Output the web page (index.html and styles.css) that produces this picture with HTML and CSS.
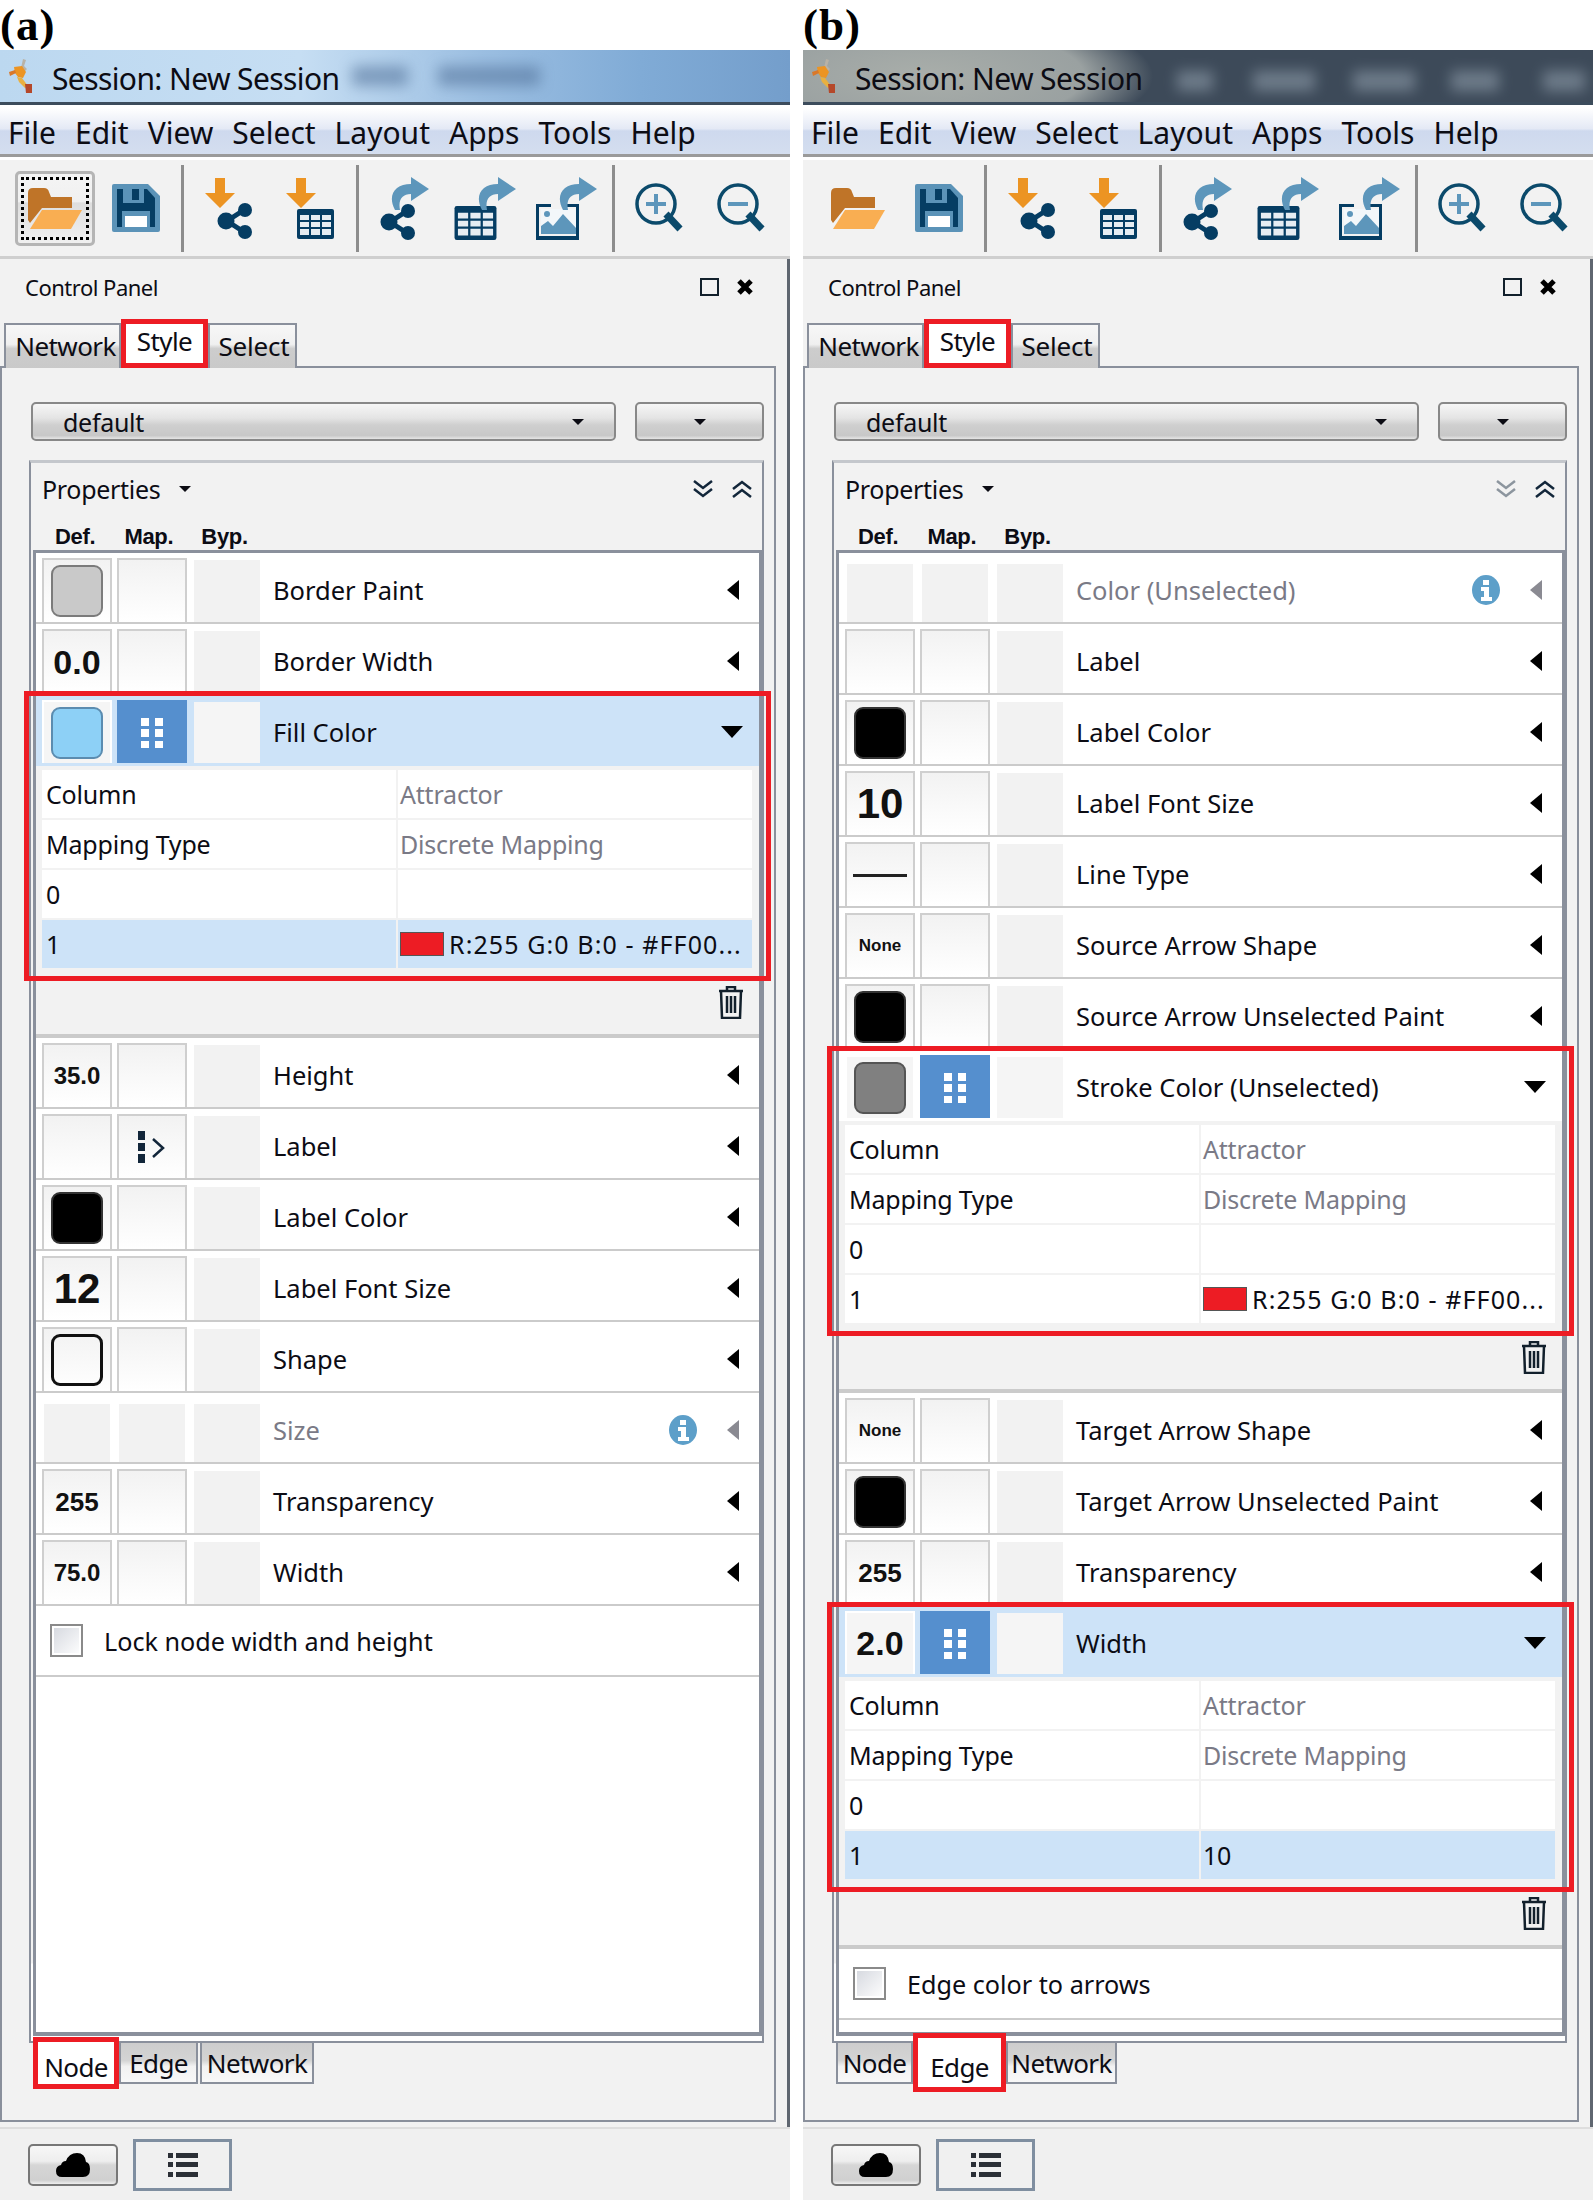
FILE: index.html
```html
<!DOCTYPE html>
<html lang="en">

<head>
    <meta charset="UTF-8" />
    <title>Session: New Session</title>
    <link rel="stylesheet" href="styles.css">
</head>

<body>
    <svg class="defs" width="0" height="0">
        <symbol id="i-run" viewBox="0 0 26 34">
            <path d="M15 0l3 1-2 6 3 3-2 2-4-3z" fill="#b9b2a6" />
            <path d="M6 8l8-1 4 6-3 6-5-1-3-4z" fill="#ec9423" />
            <path d="M1 13l6-2 1 3-6 3z" fill="#d9782a" />
            <path d="M9 18l5 1 6 8-3 2-6-6z" fill="#e9b040" />
            <path d="M17 25h7v9h-6z" fill="#b5482a" />
        </symbol>
        <symbol id="i-folder" viewBox="0 0 54 41">
            <path d="M0 5q0-5 5-5h11q4 0 5 4l2 5h21q0 0 0 4v7H14L2 35 0 32z" fill="#bf7428" />
            <path d="M14 22h40l-11 19H2z" fill="#f9ae52" />
        </symbol>
        <symbol id="i-save" viewBox="0 0 48 48">
            <path d="M0 2q0-2 2-2h34l12 12v34q0 2-2 2H2q-2 0-2-2z" fill="#5b93b8" />
            <path d="M5 5h30l8 9v29H5z" fill="#053d63" />
            <path d="M11 5h21v14H11z" fill="#5b93b8" />
            <path d="M20 5h7v11h-7z" fill="#053d63" />
            <path d="M10 27h28v18H10z" fill="#5b93b8" />
            <path d="M13 32h22v11H13z" fill="#fff" />
        </symbol>
        <symbol id="i-down" viewBox="0 0 30 30">
            <path d="M10 0h10v15h10L15 30 0 15h10z" fill="#ec9423" />
        </symbol>
        <symbol id="i-share" viewBox="0 0 36 36">
            <path d="M27 7L10 18l17 11" fill="none" stroke="#053d63" stroke-width="5" />
            <circle cx="9" cy="18" r="8.5" fill="#053d63" />
            <circle cx="28" cy="7" r="7" fill="#053d63" />
            <circle cx="28" cy="29" r="7" fill="#053d63" />
        </symbol>
        <symbol id="i-table" viewBox="0 0 37 30">
            <rect width="37" height="30" rx="2" fill="#053d63" />
            <path d="M3 6h9v5H3zM14 6h9v5h-9zM25 6h9v5h-9zM3 13h9v5H3zM14 13h9v5h-9zM25 13h9v5h-9zM3 20h9v6H3zM14 20h9v6h-9zM25 20h9v6h-9z" fill="#e6edf2" />
        </symbol>
        <symbol id="i-curve" viewBox="0 0 39 33">
            <path d="M5 33C-3 18 5 7 21 7V0l18 12-18 12v-7C12 17 8 23 10 33z" fill="#5d96bb" />
        </symbol>
        <symbol id="i-picture" viewBox="0 0 43 36">
            <path d="M0 0h15v3H3v29h37V3h-9V0h12v36H0z" fill="#053d63" />
            <path d="M5 5h35v25H5z" fill="#f3f7fa" />
            <path d="M5 30V22l7-5 5 5 10-12 13 14v6z" fill="#5d96bb" />
            <circle cx="11" cy="10" r="3" fill="#5d96bb" />
        </symbol>
        <symbol id="i-import-net" viewBox="0 0 48 61">
            <use href="#i-down" width="30" height="30" />
            <use href="#i-share" x="12" y="25" width="36" height="36" />
        </symbol>
        <symbol id="i-import-table" viewBox="0 0 49 61">
            <use href="#i-down" width="32" height="30" />
            <use href="#i-table" x="12" y="31" width="37" height="30" />
        </symbol>
        <symbol id="i-export-net" viewBox="0 0 49 63">
            <use href="#i-curve" x="10" width="39" height="33" />
            <use href="#i-share" y="27" width="36" height="36" />
        </symbol>
        <symbol id="i-export-table" viewBox="0 0 62 63">
            <use href="#i-table" y="29" width="43" height="34" />
            <use href="#i-curve" x="23" width="39" height="33" />
        </symbol>
        <symbol id="i-export-img" viewBox="0 0 61 63">
            <use href="#i-picture" y="27" width="43" height="36" />
            <use href="#i-curve" x="22" width="39" height="33" />
        </symbol>
        <symbol id="i-zoom-in" viewBox="0 0 50 50">
            <path d="M31 31l14 15" stroke="#0b4a6b" stroke-width="7" fill="none" />
            <circle cx="21" cy="21" r="19" fill="none" stroke="#0b4a6b" stroke-width="3.5" />
            <path d="M21 11v20M11 21h20" stroke="#5d96bb" stroke-width="4" />
        </symbol>
        <symbol id="i-zoom-out" viewBox="0 0 50 50">
            <path d="M31 31l14 15" stroke="#0b4a6b" stroke-width="7" fill="none" />
            <circle cx="21" cy="21" r="19" fill="none" stroke="#0b4a6b" stroke-width="3.5" />
            <path d="M11 21h20" stroke="#5d96bb" stroke-width="4" />
        </symbol>
        <symbol id="i-close" viewBox="0 0 18 18">
            <path d="M3 3l12 12M15 3L3 15" stroke="#000" stroke-width="5" />
        </symbol>
        <symbol id="i-expand" viewBox="0 0 22 20">
            <path d="M2 2l9 7 9-7M2 10l9 7 9-7" fill="none" stroke="#12263a" stroke-width="2.5" />
        </symbol>
        <symbol id="i-collapse" viewBox="0 0 22 20">
            <path d="M2 10l9-7 9 7M2 18l9-7 9 7" fill="none" stroke="#12263a" stroke-width="2.5" />
        </symbol>
        <symbol id="i-dots" viewBox="0 0 24 32">
            <path d="M1 1h8v8H1zM15 1h8v8h-8zM1 12h8v8H1zM15 12h8v8h-8zM1 24h8v7H1zM15 24h8v7h-8z" fill="#fff" />
        </symbol>
        <symbol id="i-pass" viewBox="0 0 28 32">
            <path d="M0 0h7v9H0zM0 12h7v8H0zM0 23h7v9H0z" fill="#12263a" />
            <path d="M15 8l10 9-10 9" fill="none" stroke="#12263a" stroke-width="2.5" />
        </symbol>
        <symbol id="i-info" viewBox="0 0 28 30">
            <ellipse cx="14" cy="15" rx="14" ry="15" fill="#5d9fc9" />
            <path d="M11 5h6v5h-6zM9 12h8v10h3v4H9v-4h3v-6H9z" fill="#fff" />
        </symbol>
        <symbol id="i-trash" viewBox="0 0 26 33">
            <path d="M9 4V1h8v3M1 5h24M3 5l1 27h18l1-27M9 10v17M13 10v17M17 10v17" fill="none" stroke="#12202c" stroke-width="2.5" />
        </symbol>
        <symbol id="i-cloud" viewBox="0 0 34 24">
            <path d="M6 24q-6 0-6-6 0-5 5-6 1-4 5-4 3-8 11-8 8 0 9 9 4 1 4 7 0 8-7 8z" fill="#000" />
        </symbol>
        <symbol id="i-list" viewBox="0 0 30 24">
            <path d="M0 0h5v5H0zM8 0h22v5H8zM0 9h5v5H0zM8 9h22v5H8zM0 19h5v5H0zM8 19h22v5H8z" fill="#2b2f36" />
        </symbol>
    </svg>

    <main class="figure">
        <section class="shot">
            <h2 class="fig-label">(a)</h2>
            <header class="titlebar titlebar-blue">
                <svg class="run-icon"><use href="#i-run" /></svg>
                <span class="title-text">Session: New Session</span>
                <span class="smudge smudge-a1"></span>
                <span class="smudge smudge-a2"></span>
            </header>
            <nav class="menubar">
                <span>File</span><span>Edit</span><span>View</span><span>Select</span><span>Layout</span><span>Apps</span><span>Tools</span><span>Help</span>
            </nav>
            <div class="toolbar">
                <div class="tool-btn tool-btn-focus"><svg class="ic-folder"><use href="#i-folder" /></svg></div>
                <svg class="ic-save"><use href="#i-save" /></svg>
                <i class="tool-sep sep-1"></i>
                <svg class="ic-inet"><use href="#i-import-net" /></svg>
                <svg class="ic-itab"><use href="#i-import-table" /></svg>
                <i class="tool-sep sep-2"></i>
                <svg class="ic-enet"><use href="#i-export-net" /></svg>
                <svg class="ic-etab"><use href="#i-export-table" /></svg>
                <svg class="ic-eimg"><use href="#i-export-img" /></svg>
                <i class="tool-sep sep-3"></i>
                <svg class="ic-zin"><use href="#i-zoom-in" /></svg>
                <svg class="ic-zout"><use href="#i-zoom-out" /></svg>
            </div>
            <div class="control">
                <div class="control-head">
                    <span class="control-title">Control Panel</span>
                    <i class="float-box"></i>
                    <svg class="close-ic"><use href="#i-close" /></svg>
                </div>
                <div class="tabs tabs-top">
                    <span class="tab tab-net">Network</span>
                    <span class="tab tab-on tab-style">Style</span>
                    <span class="tab tab-sel">Select</span>
                </div>
                <div class="tab-panel">
                    <div class="style-pick">
                        <div class="drop drop-main"><span>default</span><i class="caret-sm"></i></div>
                        <div class="drop drop-more"><i class="caret-sm"></i></div>
                    </div>
                    <div class="props">
                        <div class="props-head">
                            <span class="props-title">Properties</span><i class="caret-sm"></i>
                            <svg class="chev"><use href="#i-expand" /></svg>
                            <svg class="chev"><use href="#i-collapse" /></svg>
                        </div>
                        <div class="col-names"><b>Def.</b><b>Map.</b><b>Byp.</b></div>
                        <div class="prop-list">
                            <div class="row">
                                <div class="cell"><i class="swatch swatch-gray"></i></div><div class="cell"></div><div class="cell cell-byp"></div>
                                <span class="row-name">Border Paint</span><i class="arrow-left"></i>
                            </div>
                            <div class="row">
                                <div class="cell val val-l">0.0</div><div class="cell"></div><div class="cell cell-byp"></div>
                                <span class="row-name">Border Width</span><i class="arrow-left"></i>
                            </div>
                            <div class="group">
                                <div class="row row-open">
                                    <div class="cell"><i class="swatch swatch-blue"></i></div><div class="cell cell-map"><svg class="dots"><use href="#i-dots" /></svg></div><div class="cell cell-byp"></div>
                                    <span class="row-name">Fill Color</span><i class="arrow-down"></i>
                                </div>
                                <div class="map-table">
                                    <div class="mt-cell">Column</div><div class="mt-cell mt-gray">Attractor</div>
                                    <div class="mt-cell">Mapping Type</div><div class="mt-cell mt-gray">Discrete Mapping</div>
                                    <div class="mt-cell">0</div><div class="mt-cell"></div>
                                    <div class="mt-cell mt-sel">1</div><div class="mt-cell mt-sel"><i class="red-chip"></i><span class="rgb">R:255 G:0 B:0 - #FF00...</span></div>
                                </div>
                                <div class="trash-bar"><svg class="trash"><use href="#i-trash" /></svg></div>
                                <div class="red-box"></div>
                            </div>
                            <div class="row">
                                <div class="cell val val-s">35.0</div><div class="cell"></div><div class="cell cell-byp"></div>
                                <span class="row-name">Height</span><i class="arrow-left"></i>
                            </div>
                            <div class="row">
                                <div class="cell"></div><div class="cell"><svg class="pass"><use href="#i-pass" /></svg></div><div class="cell cell-byp"></div>
                                <span class="row-name">Label</span><i class="arrow-left"></i>
                            </div>
                            <div class="row">
                                <div class="cell"><i class="swatch swatch-black"></i></div><div class="cell"></div><div class="cell cell-byp"></div>
                                <span class="row-name">Label Color</span><i class="arrow-left"></i>
                            </div>
                            <div class="row">
                                <div class="cell val val-xl">12</div><div class="cell"></div><div class="cell cell-byp"></div>
                                <span class="row-name">Label Font Size</span><i class="arrow-left"></i>
                            </div>
                            <div class="row">
                                <div class="cell"><i class="swatch swatch-shape"></i></div><div class="cell"></div><div class="cell cell-byp"></div>
                                <span class="row-name">Shape</span><i class="arrow-left"></i>
                            </div>
                            <div class="row row-off">
                                <div class="cell cell-byp"></div><div class="cell cell-byp"></div><div class="cell cell-byp"></div>
                                <span class="row-name">Size</span><svg class="info"><use href="#i-info" /></svg><i class="arrow-left"></i>
                            </div>
                            <div class="row">
                                <div class="cell val val-m">255</div><div class="cell"></div><div class="cell cell-byp"></div>
                                <span class="row-name">Transparency</span><i class="arrow-left"></i>
                            </div>
                            <div class="row">
                                <div class="cell val val-s">75.0</div><div class="cell"></div><div class="cell cell-byp"></div>
                                <span class="row-name">Width</span><i class="arrow-left"></i>
                            </div>
                            <div class="row row-check">
                                <i class="check"></i><span class="check-text">Lock node width and height</span>
                            </div>
                        </div>
                    </div>
                    <div class="tabs tabs-bottom">
                        <span class="tab tab-on tab-node-a">Node</span>
                        <span class="tab tab-edge-a">Edge</span>
                        <span class="tab tab-vnet">Network</span>
                    </div>
                </div>
            </div>
            <footer class="bottom-bar">
                <div class="bar-btn"><svg class="cloud"><use href="#i-cloud" /></svg></div>
                <div class="bar-btn-on"><svg class="list-ic"><use href="#i-list" /></svg></div>
            </footer>
        </section>

        <section class="shot">
            <h2 class="fig-label">(b)</h2>
            <header class="titlebar titlebar-dark">
                <svg class="run-icon"><use href="#i-run" /></svg>
                <span class="title-text">Session: New Session</span>
                <span class="smudge smudge-b1"></span>
                <span class="smudge smudge-b2"></span>
                <span class="smudge smudge-b3"></span>
                <span class="smudge smudge-b4"></span>
                <span class="smudge smudge-b5"></span>
            </header>
            <nav class="menubar">
                <span>File</span><span>Edit</span><span>View</span><span>Select</span><span>Layout</span><span>Apps</span><span>Tools</span><span>Help</span>
            </nav>
            <div class="toolbar">
                <div class="tool-btn"><svg class="ic-folder"><use href="#i-folder" /></svg></div>
                <svg class="ic-save"><use href="#i-save" /></svg>
                <i class="tool-sep sep-1"></i>
                <svg class="ic-inet"><use href="#i-import-net" /></svg>
                <svg class="ic-itab"><use href="#i-import-table" /></svg>
                <i class="tool-sep sep-2"></i>
                <svg class="ic-enet"><use href="#i-export-net" /></svg>
                <svg class="ic-etab"><use href="#i-export-table" /></svg>
                <svg class="ic-eimg"><use href="#i-export-img" /></svg>
                <i class="tool-sep sep-3"></i>
                <svg class="ic-zin"><use href="#i-zoom-in" /></svg>
                <svg class="ic-zout"><use href="#i-zoom-out" /></svg>
            </div>
            <div class="control">
                <div class="control-head">
                    <span class="control-title">Control Panel</span>
                    <i class="float-box"></i>
                    <svg class="close-ic"><use href="#i-close" /></svg>
                </div>
                <div class="tabs tabs-top">
                    <span class="tab tab-net">Network</span>
                    <span class="tab tab-on tab-style">Style</span>
                    <span class="tab tab-sel">Select</span>
                </div>
                <div class="tab-panel">
                    <div class="style-pick">
                        <div class="drop drop-main"><span>default</span><i class="caret-sm"></i></div>
                        <div class="drop drop-more"><i class="caret-sm"></i></div>
                    </div>
                    <div class="props">
                        <div class="props-head">
                            <span class="props-title">Properties</span><i class="caret-sm"></i>
                            <svg class="chev chev-dim"><use href="#i-expand" /></svg>
                            <svg class="chev"><use href="#i-collapse" /></svg>
                        </div>
                        <div class="col-names"><b>Def.</b><b>Map.</b><b>Byp.</b></div>
                        <div class="prop-list">
                            <div class="row row-off">
                                <div class="cell cell-byp"></div><div class="cell cell-byp"></div><div class="cell cell-byp"></div>
                                <span class="row-name">Color (Unselected)</span><svg class="info"><use href="#i-info" /></svg><i class="arrow-left"></i>
                            </div>
                            <div class="row">
                                <div class="cell"></div><div class="cell"></div><div class="cell cell-byp"></div>
                                <span class="row-name">Label</span><i class="arrow-left"></i>
                            </div>
                            <div class="row">
                                <div class="cell"><i class="swatch swatch-black"></i></div><div class="cell"></div><div class="cell cell-byp"></div>
                                <span class="row-name">Label Color</span><i class="arrow-left"></i>
                            </div>
                            <div class="row">
                                <div class="cell val val-xl">10</div><div class="cell"></div><div class="cell cell-byp"></div>
                                <span class="row-name">Label Font Size</span><i class="arrow-left"></i>
                            </div>
                            <div class="row">
                                <div class="cell"><i class="line-sample"></i></div><div class="cell"></div><div class="cell cell-byp"></div>
                                <span class="row-name">Line Type</span><i class="arrow-left"></i>
                            </div>
                            <div class="row">
                                <div class="cell val val-xs">None</div><div class="cell"></div><div class="cell cell-byp"></div>
                                <span class="row-name">Source Arrow Shape</span><i class="arrow-left"></i>
                            </div>
                            <div class="row">
                                <div class="cell"><i class="swatch swatch-black"></i></div><div class="cell"></div><div class="cell cell-byp"></div>
                                <span class="row-name">Source Arrow Unselected Paint</span><i class="arrow-left"></i>
                            </div>
                            <div class="group">
                                <div class="row row-plain">
                                    <div class="cell"><i class="swatch swatch-dark"></i></div><div class="cell cell-map"><svg class="dots"><use href="#i-dots" /></svg></div><div class="cell cell-byp"></div>
                                    <span class="row-name">Stroke Color (Unselected)</span><i class="arrow-down"></i>
                                </div>
                                <div class="map-table">
                                    <div class="mt-cell">Column</div><div class="mt-cell mt-gray">Attractor</div>
                                    <div class="mt-cell">Mapping Type</div><div class="mt-cell mt-gray">Discrete Mapping</div>
                                    <div class="mt-cell">0</div><div class="mt-cell"></div>
                                    <div class="mt-cell">1</div><div class="mt-cell"><i class="red-chip"></i><span class="rgb">R:255 G:0 B:0 - #FF00...</span></div>
                                </div>
                                <div class="trash-bar"><svg class="trash"><use href="#i-trash" /></svg></div>
                                <div class="red-box"></div>
                            </div>
                            <div class="row">
                                <div class="cell val val-xs">None</div><div class="cell"></div><div class="cell cell-byp"></div>
                                <span class="row-name">Target Arrow Shape</span><i class="arrow-left"></i>
                            </div>
                            <div class="row">
                                <div class="cell"><i class="swatch swatch-black"></i></div><div class="cell"></div><div class="cell cell-byp"></div>
                                <span class="row-name">Target Arrow Unselected Paint</span><i class="arrow-left"></i>
                            </div>
                            <div class="row">
                                <div class="cell val val-m">255</div><div class="cell"></div><div class="cell cell-byp"></div>
                                <span class="row-name">Transparency</span><i class="arrow-left"></i>
                            </div>
                            <div class="group">
                                <div class="row row-open">
                                    <div class="cell val val-l">2.0</div><div class="cell cell-map"><svg class="dots"><use href="#i-dots" /></svg></div><div class="cell cell-byp"></div>
                                    <span class="row-name">Width</span><i class="arrow-down"></i>
                                </div>
                                <div class="map-table">
                                    <div class="mt-cell">Column</div><div class="mt-cell mt-gray">Attractor</div>
                                    <div class="mt-cell">Mapping Type</div><div class="mt-cell mt-gray">Discrete Mapping</div>
                                    <div class="mt-cell">0</div><div class="mt-cell"></div>
                                    <div class="mt-cell mt-sel">1</div><div class="mt-cell mt-sel">10</div>
                                </div>
                                <div class="trash-bar"><svg class="trash"><use href="#i-trash" /></svg></div>
                                <div class="red-box"></div>
                            </div>
                            <div class="row row-check">
                                <i class="check"></i><span class="check-text">Edge color to arrows</span>
                            </div>
                        </div>
                    </div>
                    <div class="tabs tabs-bottom">
                        <span class="tab tab-node-b">Node</span>
                        <span class="tab tab-on tab-edge-b">Edge</span>
                        <span class="tab tab-vnet tab-vnet-b">Network</span>
                    </div>
                </div>
            </div>
            <footer class="bottom-bar">
                <div class="bar-btn"><svg class="cloud"><use href="#i-cloud" /></svg></div>
                <div class="bar-btn-on"><svg class="list-ic"><use href="#i-list" /></svg></div>
            </footer>
        </section>
    </main>
</body>

</html>
```
FILE: styles.css
```css
* {
    box-sizing: border-box;
}

body {
    margin: 0;
    width: 1593px;
    height: 2200px;
    overflow: hidden;
    background: #fff;
    color: #0c0c14;
    font-family: "Noto Sans", "Liberation Sans", sans-serif;
}

svg {
    display: block;
    flex: none;
}

i {
    display: block;
    flex: none;
}

.defs {
    position: absolute;
}

.figure {
    display: grid;
    grid-template-columns: 790px 790px;
    column-gap: 13px;
}

.shot {
    display: flex;
    flex-direction: column;
    height: 2200px;
}

.fig-label {
    height: 50px;
    margin: 0;
    font: bold 45px/50px "Liberation Serif", serif;
    letter-spacing: 1px;
    color: #000;
}

/* title bar */
.titlebar {
    display: flex;
    align-items: center;
    height: 55px;
    border-bottom: 3px solid #3c4c5c;
    padding-left: 8px;
    overflow: hidden;
}

.titlebar-blue {
    background: linear-gradient(90deg, #bcd8f0 0, #c6def3 300px, #9cbfe2 480px, #80abd6 640px, #749ecb 790px);
}

.titlebar-dark {
    background: radial-gradient(ellipse 230px 70px at 120px 26px, #a9aeaa 0, #9aa1a1 70%, rgba(154, 161, 161, 0) 100%), #3d4a59;
}

.run-icon {
    width: 26px;
    height: 34px;
}

.title-text {
    margin: 5px 0 0 18px;
    width: 292px;
    font-size: 30px;
    line-height: 40px;
    white-space: nowrap;
    letter-spacing: -0.6px;
}

.smudge {
    height: 20px;
    filter: blur(7px);
    background: #4f6f97;
    opacity: 0.55;
}

.smudge-a1 {
    width: 56px;
    margin-left: 8px;
}

.smudge-a2 {
    width: 102px;
    margin-left: 30px;
}

.titlebar-dark .smudge {
    background: #7b8997;
    opacity: 0.8;
    margin-top: 10px;
}

.smudge-b1 {
    width: 36px;
    margin-left: 30px;
}

.smudge-b2 {
    width: 62px;
    margin-left: 40px;
}

.smudge-b3 {
    width: 62px;
    margin-left: 38px;
}

.smudge-b4 {
    width: 48px;
    margin-left: 36px;
}

.smudge-b5 {
    width: 42px;
    margin-left: 44px;
}

/* menu */
.menubar {
    display: flex;
    align-items: center;
    gap: 19px;
    height: 49px;
    margin-top: 3px;
    padding: 3px 0 0 8px;
    border-bottom: 3px solid #9a9a9a;
    background: linear-gradient(#fff 0, #e4e9f5 45%, #ced9ee 50%, #d4deef 100%);
    font-size: 30px;
}

/* toolbar */
.toolbar {
    display: flex;
    align-items: center;
    height: 99px;
    margin-top: 3px;
    padding-left: 15px;
    border-bottom: 3px solid #cfcfcf;
    background: #f2f2f2;
}

.tool-btn {
    display: flex;
    align-items: center;
    justify-content: center;
    width: 80px;
    height: 75px;
    border: 3px solid transparent;
    border-radius: 5px;
}

.tool-btn-focus {
    border-color: #b5b5b5;
    outline: 3px dotted #000;
    outline-offset: -9px;
    background: linear-gradient(#f4f4f4 0, #f0f0f0 40%, #dedede 42%, #f0f0f0 100%);
}

.ic-folder {
    width: 54px;
    height: 41px;
}

.ic-save {
    width: 48px;
    height: 48px;
    margin-left: 17px;
}

.tool-sep {
    width: 3px;
    height: 87px;
    background: #8d8d8d;
}

.sep-1 {
    margin-left: 21px;
}

.ic-inet {
    width: 48px;
    height: 61px;
    margin-left: 21px;
}

.ic-itab {
    width: 49px;
    height: 61px;
    margin-left: 32px;
}

.sep-2 {
    margin-left: 22px;
}

.ic-enet {
    width: 49px;
    height: 63px;
    margin-left: 21px;
}

.ic-etab {
    width: 62px;
    height: 63px;
    margin-left: 25px;
}

.ic-eimg {
    width: 61px;
    height: 63px;
    margin-left: 20px;
}

.sep-3 {
    margin-left: 15px;
}

.ic-zin {
    width: 50px;
    height: 50px;
    margin-left: 20px;
}

.ic-zout {
    width: 50px;
    height: 50px;
    margin-left: 32px;
}

/* control panel */
.control {
    height: 1868px;
    background: #f2f2f2;
    border-right: 3px solid #5f6670;
}

.control-head {
    display: flex;
    align-items: center;
    height: 64px;
    padding: 0 0 8px 25px;
}

.control-title {
    width: 675px;
    font-size: 22px;
    letter-spacing: -0.5px;
}

.float-box {
    width: 19px;
    height: 18px;
    border: 2px solid #12202c;
}

.close-ic {
    width: 18px;
    height: 18px;
    margin-left: 17px;
}

.tabs {
    display: flex;
}

.tabs-top {
    height: 43px;
    padding-left: 4px;
}

.tab {
    display: flex;
    align-items: center;
    justify-content: center;
    font-size: 26px;
    letter-spacing: -0.6px;
}

.tabs-top .tab {
    height: 45px;
    padding-bottom: 2px;
    border: 2px solid #8a909c;
    border-bottom: 0;
    background: linear-gradient(#f7f7f7 0, #f0f0f0 45%, #cdcdcd 55%, #c9c9c9 100%);
}

.tabs-top .tab-net {
    width: 117px;
    padding-left: 6px;
}

.tabs-top .tab-sel {
    width: 89px;
    padding-left: 3px;
    letter-spacing: -0.2px;
}

.tabs-top .tab-on,
.tabs-bottom .tab-on {
    position: relative;
    z-index: 1;
    border: 5px solid #ed1c24;
    background: #fff;
}

.tabs-top .tab-style {
    width: 87px;
    height: 49px;
    margin-top: -4px;
    padding-bottom: 5px;
}

.tab-panel {
    width: 776px;
    height: 1756px;
    padding: 34px 10px 0 29px;
    border: 2px solid #8a909c;
}

.style-pick {
    display: flex;
    gap: 19px;
    height: 39px;
    margin-bottom: 19px;
}

.drop {
    display: flex;
    align-items: center;
    justify-content: center;
    height: 39px;
    border: 2px solid #888;
    border-radius: 5px;
    background: linear-gradient(#f6f6f6 0, #e4e4e4 40%, #cfcfcf 60%, #c8c8c8 90%, #e6e6e6 100%);
}

.drop-main {
    justify-content: space-between;
    width: 587px;
    padding: 0 30px 0 30px;
    font-size: 25px;
    letter-spacing: -0.3px;
}

.drop-more {
    width: 129px;
}

.caret-sm {
    width: 0;
    height: 0;
    border-left: 6px solid transparent;
    border-right: 6px solid transparent;
    border-top: 6px solid #0c0c14;
}

/* properties box */
.props {
    width: 735px;
    height: 1583px;
    margin-left: -2px;
    padding: 0 0 9px 2px;
    border: 2px solid #8a909c;
    border-top: 3px solid #c4c7cc;
    background: linear-gradient(#f2f2f2 0, #f2f2f2 1500px, #fff 1501px);
}

.props-head {
    display: flex;
    align-items: center;
    height: 52px;
    padding: 0 0 0 9px;
}

.props-title {
    width: 137px;
    flex: none;
    font-size: 25px;
    letter-spacing: -0.3px;
}

.props-head .caret-sm {
    margin-right: 501px;
}

.chev {
    width: 22px;
    height: 20px;
}

.chev + .chev {
    margin-left: 17px;
}

.chev-dim {
    opacity: 0.45;
}

.col-names {
    display: flex;
    align-items: center;
    height: 35px;
    padding: 8px 0 0 22px;
    font-family: "Liberation Sans", sans-serif;
    font-size: 22px;
    letter-spacing: -0.3px;
}

.col-names b:nth-child(2) {
    margin-left: 29px;
}

.col-names b:nth-child(3) {
    margin-left: 28px;
}

.prop-list {
    height: 1486px;
    border: 3px solid #8a909c;
    border-bottom-width: 4px;
    background: #fff;
}

.row {
    display: flex;
    align-items: stretch;
    height: 71px;
    padding: 5px 0 0 6px;
    border-bottom: 2px solid #cbcbcb;
    background: #fff;
}

.cell {
    display: flex;
    align-items: center;
    justify-content: center;
    flex: none;
    width: 70px;
    margin-right: 5px;
    border: 2px solid #cfcfcf;
    border-bottom: 0;
    background: linear-gradient(#f2f2f2, #fff);
}

.cell-byp {
    width: 66px;
    margin: 2px 2px 0 2px;
    border: 0;
    background: #f2f2f2;
}

.row-off .cell-byp {
    width: 66px;
    margin: 6px 7px 0 2px;
}

.row-name {
    flex: 1;
    align-self: center;
    margin-left: 11px;
    font-size: 25.5px;
    white-space: nowrap;
}

.row-off .row-name {
    flex: none;
    width: 396px;
    margin-left: 6px;
    color: #7a7a86;
}

.row-off .info {
    width: 28px;
    height: 30px;
    align-self: center;
    margin-right: 30px;
}

.arrow-left {
    align-self: center;
    width: 0;
    height: 0;
    margin-right: 20px;
    border-top: 10px solid transparent;
    border-bottom: 10px solid transparent;
    border-right: 12px solid #000;
}

.row-off .arrow-left {
    border-right-color: #8a8a92;
}

.arrow-down {
    align-self: center;
    width: 0;
    height: 0;
    margin-right: 16px;
    border-left: 11px solid transparent;
    border-right: 11px solid transparent;
    border-top: 12px solid #000;
}

.val {
    font-family: "Liberation Sans", sans-serif;
    font-weight: bold;
    color: #111;
}

.val-xs {
    font-size: 17px;
}

.val-s {
    font-size: 24px;
}

.val-m {
    font-size: 26px;
}

.val-l {
    font-size: 34px;
}

.val-xl {
    font-size: 42px;
}

.swatch {
    width: 52px;
    height: 52px;
    border-radius: 9px;
}

.swatch-gray {
    background: #c9c9c9;
    border: 2px solid #7b7b7b;
}

.swatch-blue {
    background: #8dd0f6;
    border: 2px solid #5b8cb0;
}

.swatch-black {
    background: #000;
    border: 2px solid #333;
}

.swatch-dark {
    background: #808080;
    border: 2px solid #555;
}

.swatch-shape {
    background: transparent;
    border: 3px solid #111;
}

.line-sample {
    width: 54px;
    height: 3px;
    background: #222;
}

.dots {
    width: 24px;
    height: 32px;
}

.pass {
    width: 28px;
    height: 32px;
}

.row-open {
    background: #cde3f8;
    padding-bottom: 3px;
    border-bottom: 0;
}

.row-plain {
    padding-bottom: 3px;
    border-bottom: 0;
}

.cell-map {
    background: #558fce;
    border-color: #fff;
    border-bottom: 0;
}

.row-open .cell,
.row-plain .cell {
    background: #f5f5f5;
    border-color: #fff;
    border-bottom: 0;
}

.row-open .cell-map,
.row-plain .cell-map {
    background: #558fce;
    border-color: #558fce;
}

.group {
    position: relative;
    display: flex;
    flex-direction: column;
    height: 343px;
    border-bottom: 4px solid #cbcbcb;
    background: #f2f2f2;
}

.map-table {
    display: grid;
    grid-template-columns: 354px 354px;
    grid-auto-rows: 48px;
    gap: 2px;
    margin: 4px 7px 0 6px;
    background: #f2f2f2;
}

.mt-cell {
    display: flex;
    align-items: center;
    padding-left: 4px;
    background: #fff;
    font-size: 25px;
    white-space: nowrap;
    letter-spacing: -0.2px;
}

.mt-cell:nth-child(even) {
    padding-left: 2px;
}

.mt-gray {
    color: #7a7a86;
}

.mt-sel {
    background: #cde3f8;
}

.rgb {
    font-size: 25px;
    letter-spacing: 1.1px;
}

.red-chip {
    width: 44px;
    height: 24px;
    margin: 0 5px 0 0;
    background: #ed1c24;
    border: 1px solid #555;
}

.trash-bar {
    display: flex;
    justify-content: flex-end;
    padding: 18px 15px 0 0;
}

.trash {
    width: 26px;
    height: 33px;
}

.red-box {
    position: absolute;
    top: -4px;
    left: -12px;
    right: -12px;
    height: 290px;
    border: 5px solid #ed1c24;
}

.row-check {
    align-items: center;
    padding: 0 0 0 14px;
}

.check {
    width: 33px;
    height: 33px;
    border: 2px solid #8a8a8a;
    outline: 2px solid #fff;
    outline-offset: -4px;
    background: linear-gradient(135deg, #d4d7de, #fff);
}

.check-text {
    margin-left: 21px;
    font-size: 25.2px;
}

/* bottom tabs */
.tabs-bottom {
    align-items: flex-start;
    padding-left: 2px;
}

.tabs-bottom .tab {
    height: 41px;
    border: 2px solid #8a909c;
    border-top: 0;
    background: linear-gradient(#cdcdcd 0, #d4d4d4 45%, #f2f2f2 60%, #f8f8f8 100%);
}

.tabs-bottom .tab-on {
    border: 5px solid #ed1c24;
    background: #fff;
}

.tabs-bottom .tab-node-a {
    width: 86px;
    height: 52px;
    margin-top: -6px;
    padding-top: 8px;
}

.tabs-bottom .tab-edge-a {
    width: 79px;
}

.tabs-bottom .tab-vnet {
    width: 114px;
    margin-left: 2px;
}

.tabs-bottom .tab-node-b {
    width: 77px;
}

.tabs-bottom .tab-edge-b {
    width: 93px;
    height: 59px;
    margin-top: -10px;
    padding-top: 8px;
}

.tabs-bottom .tab-vnet-b {
    width: 111px;
    margin-left: 0;
}

/* bottom bar */
.bottom-bar {
    display: flex;
    align-items: center;
    gap: 15px;
    height: 73px;
    padding: 0 0 0 28px;
    border-top: 2px solid #dedede;
    background: #f0f0f0;
}

.bar-btn {
    display: flex;
    align-items: center;
    justify-content: center;
    width: 90px;
    height: 42px;
    border: 2px solid #777;
    border-radius: 5px;
    background: linear-gradient(#f7f7f7 0, #eee 40%, #d6d6d6 50%, #d0d0d0 90%, #eee 100%);
}

.cloud {
    width: 34px;
    height: 24px;
}

.bar-btn-on {
    display: flex;
    align-items: center;
    justify-content: center;
    width: 99px;
    height: 52px;
    border: 3px solid #7f8ea0;
}

.list-ic {
    width: 30px;
    height: 24px;
}
```
